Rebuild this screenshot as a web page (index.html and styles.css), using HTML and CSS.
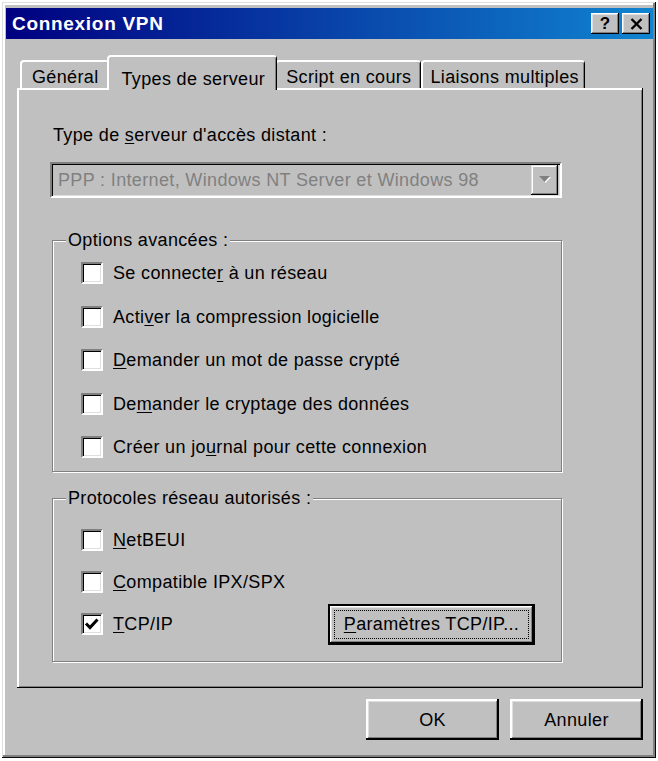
FILE: index.html
```html
<!DOCTYPE html>
<html lang="fr">
<head>
<meta charset="utf-8">
<title>Connexion VPN</title>
<link rel="stylesheet" href="styles.css">
</head>
<body>
<div class="window">
  <div class="titlebar">
    <span class="title">Connexion VPN</span>
    <div class="tb-buttons">
      <button class="tb-btn tb-help">?</button>
      <button class="tb-btn" aria-label="Fermer">
        <svg width="13" height="12" viewBox="0 0 13 12"><path d="M1.5 1 L11.5 11 M11.5 1 L1.5 11" stroke="#000" stroke-width="2.4" fill="none"/></svg>
      </button>
    </div>
  </div>

  <div class="tabs">
    <div class="tab tab-general">Général</div>
    <div class="tab active">Types de serveur</div>
    <div class="tab tab-script">Script en cours</div>
    <div class="tab tab-liaisons">Liaisons multiples</div>
  </div>

  <div class="panel">
    <div class="label">Type de <u>s</u>erveur d'accès distant :</div>
    <div class="combo">
      <span class="combo-text">PPP : Internet, Windows NT Server et Windows 98</span>
      <span class="combo-btn">
        <svg width="14" height="8" viewBox="0 0 14 8"><polygon points="2,1 13,1 7.5,7" fill="#fff"/><polygon points="1,0 12,0 6.5,6" fill="#808080"/></svg>
      </span>
    </div>

    <div class="group group-options">
      <div class="group-title">Options avancées :</div>
      <div class="row"><span class="check"></span><span>Se connecte<u>r</u> à un réseau</span></div>
      <div class="row"><span class="check"></span><span>Acti<u>v</u>er la compression logicielle</span></div>
      <div class="row"><span class="check"></span><span><u>D</u>emander un mot de passe crypté</span></div>
      <div class="row"><span class="check"></span><span>De<u>m</u>ander le cryptage des données</span></div>
      <div class="row"><span class="check"></span><span>Créer un jo<u>u</u>rnal pour cette connexion</span></div>
    </div>

    <div class="group group-protocols">
      <div class="group-title">Protocoles réseau autorisés :</div>
      <div class="row"><span class="check"></span><span><u>N</u>etBEUI</span></div>
      <div class="row"><span class="check"></span><span><u>C</u>ompatible IPX/SPX</span></div>
      <div class="row">
        <span class="check checked"><svg width="18" height="18" viewBox="0 0 18 18"><polyline points="3,8.5 7,12.5 14.5,4.5" stroke="#000" stroke-width="3" fill="none"/></svg></span>
        <span><u>T</u>CP/IP</span>
        <button class="btn btn-default btn-tcp"><span class="focus"><u>P</u>aramètres TCP/IP...</span></button>
      </div>
    </div>
  </div>

  <div class="actions">
    <button class="btn">OK</button>
    <button class="btn">Annuler</button>
  </div>
</div>
</body>
</html>
```

FILE: styles.css
```css
body {
  margin: 0;
  background: #fff;
  font-family: "Liberation Sans", Arial, sans-serif;
  font-size: 18px;
  line-height: 20px;
  letter-spacing: 0.35px;
  color: #000;
}

u {
  text-decoration: underline;
  text-decoration-thickness: 1px;
  text-underline-offset: 2px;
}

.window {
  margin: 2px 0 0 2px;
  width: 654px;
  height: 756px;
  box-sizing: border-box;
  padding: 6px 3px 0 4px;
  background: #c0c0c0;
  box-shadow: inset -1px -1px #0a0a0a, inset 1px 1px #dfdfdf, inset -3px -3px #808080, inset 3px 3px #fff;
}

.titlebar {
  height: 31px;
  display: flex;
  align-items: center;
  justify-content: space-between;
  padding: 0 3px 0 6px;
  background: linear-gradient(to right, #000080, #1084d0);
}

.title {
  color: #fff;
  font-weight: bold;
  font-size: 19px;
  letter-spacing: 0.7px;
}

.tb-buttons {
  display: flex;
  gap: 3px;
}

.tb-btn {
  width: 28px;
  height: 21px;
  box-sizing: border-box;
  padding: 0;
  border: 0;
  background: #c0c0c0;
  display: flex;
  align-items: center;
  justify-content: center;
  box-shadow: inset -1px -1px #000, inset 1px 1px #fff, inset -2px -2px #808080, inset 2px 2px #dfdfdf;
  font-family: "Liberation Sans", Arial, sans-serif;
  font-weight: bold;
  font-size: 17px;
  line-height: 17px;
  color: #000;
}

.tabs {
  display: flex;
  align-items: flex-end;
  height: 33px;
  margin: 16px 0 0 14px;
}

.tab {
  height: 28px;
  box-sizing: border-box;
  padding: 5px 9px 0 10px;
  background: #c0c0c0;
  border-top: 2px solid #fff;
  border-left: 2px solid #fff;
  border-right: 1px solid #000;
  border-radius: 4px 4px 0 0;
  box-shadow: inset -1px 0 #808080;
  white-space: nowrap;
}

.tab.tab-script {
  padding-left: 9px;
  padding-right: 9px;
}

.tab.tab-liaisons {
  padding-left: 7px;
  padding-right: 5px;
}

.tab.active {
  position: relative;
  z-index: 1;
  height: 35px;
  margin: 0 -2px -2px;
  padding: 12px 11px 0 13px;
}

.panel {
  height: 600px;
  box-sizing: border-box;
  margin: 0 10px 0 11px;
  padding: 37px 81px 0 33px;
  box-shadow: inset -1px -1px #000, inset 2px 2px #fff, inset -2px -2px #808080;
}

.label {
  margin-left: 3px;
}

.combo {
  margin-top: 17px;
  height: 36px;
  box-sizing: border-box;
  display: flex;
  align-items: center;
  border-style: solid;
  border-width: 2px;
  border-color: #808080 #fff #fff #808080;
  box-shadow: inset 1px 1px #000, inset -1px -1px #dfdfdf;
  padding: 0 2px 0 6px;
  color: #808080;
}

.combo-btn {
  margin-left: auto;
  width: 27px;
  height: 30px;
  box-sizing: border-box;
  display: flex;
  align-items: center;
  justify-content: center;
  background: #c0c0c0;
  box-shadow: inset -1px -1px #000, inset 1px 1px #dfdfdf, inset -2px -2px #808080, inset 2px 2px #fff;
}

.group {
  margin-left: 2px;
  border: 1px solid #808080;
  box-shadow: inset 1px 1px #fff, 1px 1px #fff;
}

.group-options {
  margin-top: 42px;
  padding-bottom: 2px;
}

.group-protocols {
  margin-top: 26px;
  padding-bottom: 16px;
  padding-right: 26px;
}

.group-title {
  width: max-content;
  margin: -11px 0 0 13px;
  padding: 0 2px;
  background: #c0c0c0;
}

.group-options .group-title {
  margin-bottom: 1.5px;
}

.group-protocols .group-title {
  margin-bottom: 11px;
}

.row {
  display: flex;
  align-items: center;
  gap: 10px;
  padding-left: 28px;
  height: 43.5px;
}

.group-protocols .row {
  height: 42px;
}

.check {
  width: 22px;
  height: 22px;
  box-sizing: border-box;
  flex: none;
  background: #fff;
  border-style: solid;
  border-width: 2px;
  border-color: #808080 #fff #fff #808080;
  box-shadow: inset 1px 1px #000, inset -1px -1px #dfdfdf;
  display: flex;
  align-items: center;
  justify-content: center;
}

.btn {
  width: 133px;
  height: 41px;
  box-sizing: border-box;
  padding: 0;
  border: 0;
  background: #c0c0c0;
  font: inherit;
  letter-spacing: inherit;
  color: #000;
  box-shadow: inset -2px -2px #000, inset 2px 2px #fff, inset -3px -3px #808080, inset 3px 3px #dfdfdf;
}

.btn-default {
  border: 2px solid #000;
  box-shadow: inset -1px -1px #000, inset 1px 1px #fff, inset -2px -2px #808080, inset 2px 2px #dfdfdf;
  display: flex;
  padding: 4px;
}

.btn-tcp {
  width: 207px;
  margin-left: auto;
}

.focus {
  flex: 1;
  display: flex;
  align-items: center;
  justify-content: center;
  border: 1px dotted #000;
}

.actions {
  display: flex;
  justify-content: flex-end;
  gap: 11px;
  margin: 11px 10px 0 0;
}
```
